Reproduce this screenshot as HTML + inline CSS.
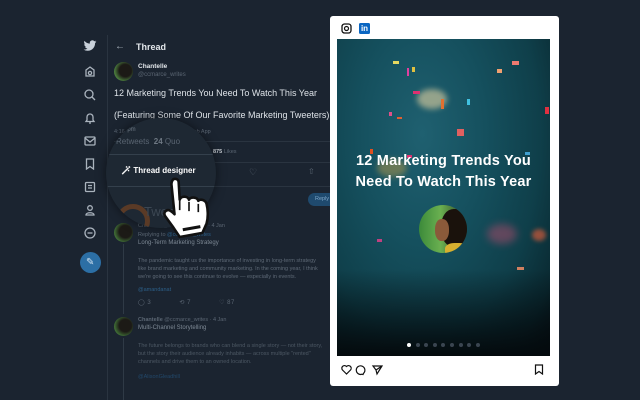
<!DOCTYPE html>
<html><head><meta charset="utf-8"><style>
*{margin:0;padding:0;box-sizing:border-box}
body{width:640px;height:400px;overflow:hidden;background:#1b2430;font-family:"Liberation Sans",sans-serif;position:relative;color:#d8dde3}
.a{position:absolute;white-space:nowrap}
.dim{color:#5b6673}
.side svg{position:absolute;left:84px}
</style></head><body>
<div class="a" style="left:107px;top:35px;width:1px;height:365px;background:#2a3440"></div>
<svg class="a" style="left:83px;top:40px" width="14" height="12" viewBox="0 0 24 20"><path d="M23 2.5c-.8.4-1.7.6-2.6.7.9-.6 1.6-1.4 2-2.5-.9.5-1.9.9-2.9 1.1A4.5 4.5 0 0 0 11.8 6 12.8 12.8 0 0 1 2.5 1.3 4.5 4.5 0 0 0 3.9 7.3c-.7 0-1.4-.2-2-.6 0 2.2 1.6 4 3.6 4.4-.7.2-1.4.2-2 .1.6 1.8 2.2 3.1 4.2 3.1A9 9 0 0 1 1 16.2 12.8 12.8 0 0 0 7.9 18.2c8.3 0 12.8-6.9 12.8-12.8v-.6c.9-.6 1.6-1.4 2.3-2.3z" fill="#c9d1da"/></svg>
<div class="side" style="stroke:#aab3bd;fill:none;stroke-width:1.3">
<svg style="top:66px" width="12" height="12"><path d="M2 4l4-3 4 3v6H2z"/><circle cx="6" cy="7" r="1.6"/></svg>
<svg style="top:89px" width="12" height="12"><circle cx="5" cy="5" r="4"/><path d="M8 8l3 3"/></svg>
<svg style="top:112px" width="12" height="12"><path d="M3 8V5a3 3 0 0 1 6 0v3l1 1.5H2zM5 11h2"/></svg>
<svg style="top:135px" width="12" height="12"><rect x="1" y="2" width="10" height="8" rx="1"/><path d="M1 3l5 4 5-4"/></svg>
<svg style="top:158px" width="12" height="12"><path d="M2.5 1h7v10L6 8.5 2.5 11z"/></svg>
<svg style="top:181px" width="12" height="12"><rect x="1.5" y="1.5" width="9" height="9" rx="1"/><path d="M4 4.5h4M4 7h4"/></svg>
<svg style="top:204px" width="12" height="12"><circle cx="6" cy="4" r="2.3"/><path d="M2 11c0-3 8-3 8 0z"/></svg>
<svg style="top:227px" width="12" height="12"><circle cx="6" cy="6" r="5"/><path d="M3.5 6h5"/></svg>
</div>
<div class="a" style="left:80px;top:252px;width:21px;height:21px;border-radius:50%;background:#2c6fa5"></div>
<div class="a" style="left:86px;top:257px;color:#cfe1f0;font-size:10px">✎</div>
<div class="a" style="left:115px;top:41px;font-size:10px;color:#aab3bd">←</div>
<div class="a" style="left:136px;top:42px;font-size:9px;font-weight:bold;color:#e4e8ec">Thread</div>
<div class="a" style="left:114px;top:62px;width:19px;height:19px;border-radius:50%;background:radial-gradient(circle at 60% 45%,#1c1a16 40%,#4a7a3c 70%,#7aa060)"></div>
<div class="a" style="left:138px;top:63px;font-size:6.5px;font-weight:bold;color:#e0e4e8">Chantelle</div>
<div class="a dim" style="left:138px;top:72px;font-size:6px">@ccmarce_writes</div>
<div class="a" style="left:114px;top:88px;font-size:9px;color:#dde2e7">12 Marketing Trends You Need To Watch This Year</div>
<div class="a" style="left:114px;top:110px;font-size:9px;color:#dde2e7">(Featuring Some Of Our Favorite Marketing Tweeters)</div>
<div class="a dim" style="left:114px;top:129px;font-size:5.5px">4:16 pm · 4 Jan 2021 · Twitter Web App</div>
<div class="a" style="left:114px;top:141px;width:216px;height:1px;background:#2a3440"></div>
<div class="a" style="left:213px;top:149px;font-size:5.5px;color:#c9ced4"><b>875</b> <span class="dim">Likes</span></div>
<div class="a" style="left:114px;top:162px;width:216px;height:1px;background:#2a3440"></div>
<div class="a dim" style="left:249px;top:167px;font-size:9px">♡</div>
<div class="a dim" style="left:308px;top:167px;font-size:8px">⇧</div>
<div class="a" style="left:114px;top:186px;width:216px;height:1px;background:#2a3440"></div>
<div class="a" style="left:308px;top:193px;width:30px;height:13px;border-radius:7px;background:#1f4a6e;font-size:5.5px;color:#7ea6c8;padding:3px 7px">Reply</div>
<div class="a" style="left:114px;top:223px;width:19px;height:19px;border-radius:50%;background:radial-gradient(circle at 60% 45%,#1c1a16 40%,#3e6a34 70%,#6a8e58)"></div>
<div class="a" style="left:123px;top:244px;width:1px;height:70px;background:#2f3a46"></div>
<div class="a dim" style="left:138px;top:223px;font-size:5.5px">Chantelle @ccmarce_writes · 4 Jan</div>
<div class="a dim" style="left:138px;top:232px;font-size:5.5px">Replying to <span style="color:#2c5f88">@ccmarce_writes</span></div>
<div class="a" style="left:138px;top:240px;font-size:6px;color:#7d8894">Long-Term Marketing Strategy</div>
<div class="a" style="left:138px;top:257px;font-size:5.5px;line-height:8px;color:#5e6976">The pandemic taught us the importance of investing in long-term strategy<br>like brand marketing and community marketing. In the coming year, I think<br>we're going to see this continue to evolve — especially in events.</div>
<div class="a" style="left:138px;top:287px;font-size:5.5px;color:#2c5f88">@amandanat</div>
<div class="a dim" style="left:138px;top:299px;font-size:6px;letter-spacing:.5px">◯ 3 &nbsp;&nbsp;&nbsp;&nbsp;&nbsp;&nbsp;&nbsp;&nbsp;&nbsp;&nbsp;&nbsp;&nbsp;⟲ 7 &nbsp;&nbsp;&nbsp;&nbsp;&nbsp;&nbsp;&nbsp;&nbsp;&nbsp;&nbsp;&nbsp;&nbsp;♡ 87</div>
<div class="a" style="left:114px;top:317px;width:19px;height:19px;border-radius:50%;background:radial-gradient(circle at 60% 45%,#1c1a16 40%,#3e6a34 70%,#6a8e58)"></div>
<div class="a" style="left:123px;top:338px;width:1px;height:62px;background:#2f3a46"></div>
<div class="a dim" style="left:138px;top:317px;font-size:5.5px"><b>Chantelle</b> @ccmarce_writes · 4 Jan</div>
<div class="a" style="left:138px;top:325px;font-size:6px;color:#7d8894">Multi-Channel Storytelling</div>
<div class="a" style="left:138px;top:342px;font-size:5.5px;line-height:8px;color:#4d5864">The future belongs to brands who can blend a single story — not their story,<br>but the story their audience already inhabits — across multiple "rented"<br>channels and drive them to an owned location.</div>
<div class="a" style="left:138px;top:374px;font-size:5.5px;color:#22486a">@AlisonGleadhill</div>
<div class="a" style="left:106px;top:118px;width:110px;height:110px;border-radius:50%;background:#1e2833;box-shadow:0 0 10px rgba(0,0,0,.5);overflow:hidden">
 <div class="a" style="left:8px;top:9px;font-size:6px;color:#6c7783">4:16 pm</div>
 <div class="a" style="left:10px;top:19px;font-size:8px;color:#5a6572">Retweets &nbsp;<b style="color:#6e7883">24</b> Quo</div>
 <div class="a" style="left:0;top:36px;width:110px;height:1px;background:#34404c"></div>
 <div class="a" style="left:0;top:68px;width:110px;height:1px;background:#34404c"></div>
 <div class="a" style="left:10px;top:86px;width:34px;height:34px;border-radius:50%;border:5px solid #5a3a26"></div>
 <div class="a" style="left:38px;top:86px;font-size:13px;color:#3c4753">Tweet</div>
</div>
<div class="a" style="left:121px;top:166px;font-size:8px;font-weight:bold;color:#fff">🪄︎ Thread designer</div>
<svg class="a" style="left:160px;top:176px" width="58" height="62" viewBox="0 0 56 60"><path d="M13 3c3-1 5 1 5 3l1 17c1-4 8-4 9 0 1-3 8-3 9 1 2-2 7-1 8 3 1 4 2 12 0 19l-4 9-22 4-6-9-8-11c-2-3 0-6 3-6 2 0 4 2 6 4L11 8c0-2 1-4 2-5z" fill="#fff" stroke="#111" stroke-width="2.5" stroke-linejoin="round"/><path d="M22 52l17-3" stroke="#111" stroke-width="3"/><path d="M19 24v9M28 25v9M37 27v8" stroke="#111" stroke-width="1.6"/></svg>
<div class="a" style="left:330px;top:16px;width:229px;height:370px;background:#fff;border-radius:3px"></div>
<svg class="a" style="left:341px;top:23px" width="11" height="11"><rect x="1" y="1" width="9" height="9" rx="2.5" fill="none" stroke="#111" stroke-width="1.3"/><circle cx="5.5" cy="5.5" r="2" fill="none" stroke="#111" stroke-width="1.2"/></svg>
<div class="a" style="left:359px;top:23px;width:11px;height:11px;background:#0a66c2;border-radius:1.5px;color:#fff;font-size:8px;font-weight:bold;line-height:11px;text-align:center">in</div>
<div class="a" style="left:337px;top:39px;width:213px;height:317px;overflow:hidden;background:radial-gradient(ellipse at 40% 30%,#1f6070 0%,#15505e 35%,#0f3f4a 65%,#0a2a32 85%,#050c10 100%)">
 <div class="a" style="left:0;top:230px;width:213px;height:87px;background:linear-gradient(#0b2a3200,#040a0d)"></div>
 <div class="a" style="left:80px;top:50px;width:30px;height:20px;border-radius:50%;background:#c8c29a;opacity:.7;filter:blur(3px)"></div>
 <div class="a" style="left:40px;top:120px;width:30px;height:18px;border-radius:50%;background:#b79a4a;opacity:.5;filter:blur(3px)"></div>
 <div class="a" style="left:150px;top:185px;width:30px;height:20px;border-radius:50%;background:#b04a6a;opacity:.5;filter:blur(4px)"></div>
 <div class="a" style="left:195px;top:190px;width:14px;height:12px;border-radius:50%;background:#d05a3a;opacity:.7;filter:blur(2px)"></div>
 <div class="a" style="left:56px;top:22px;width:6px;height:3px;background:#e6d860"></div>
 <div class="a" style="left:175px;top:22px;width:7px;height:4px;background:#ee7a70"></div>
 <div class="a" style="left:160px;top:30px;width:5px;height:4px;background:#f0a070"></div>
 <div class="a" style="left:70px;top:29px;width:2px;height:8px;background:#e040a0"></div>
 <div class="a" style="left:75px;top:28px;width:3px;height:5px;background:#e0c040"></div>
 <div class="a" style="left:76px;top:52px;width:7px;height:3px;background:#e03070"></div>
 <div class="a" style="left:104px;top:60px;width:3px;height:10px;background:#e07030"></div>
 <div class="a" style="left:130px;top:60px;width:3px;height:6px;background:#40c0e0"></div>
 <div class="a" style="left:120px;top:90px;width:7px;height:7px;background:#e06060"></div>
 <div class="a" style="left:52px;top:73px;width:3px;height:4px;background:#e0508a"></div>
 <div class="a" style="left:60px;top:78px;width:5px;height:2px;background:#e06030"></div>
 <div class="a" style="left:33px;top:110px;width:3px;height:5px;background:#e05020"></div>
 <div class="a" style="left:70px;top:116px;width:5px;height:3px;background:#e03070"></div>
 <div class="a" style="left:208px;top:68px;width:4px;height:7px;background:#e03040"></div>
 <div class="a" style="left:188px;top:113px;width:5px;height:3px;background:#40a0d0"></div>
 <div class="a" style="left:40px;top:200px;width:5px;height:3px;background:#c04080"></div>
 <div class="a" style="left:180px;top:228px;width:7px;height:3px;background:#d08060"></div>
 <div class="a" style="left:0;top:112px;width:213px;text-align:center;font-size:14.5px;font-weight:bold;color:#fff;line-height:21px;letter-spacing:.2px">12 Marketing Trends You<br>Need To Watch This Year</div>
 <div class="a" style="left:82px;top:166px;width:48px;height:48px;border-radius:50%;overflow:hidden;background:linear-gradient(90deg,#3c8a3a,#6ab050 45%,#2a3a20)">
  <div class="a" style="left:22px;top:4px;width:28px;height:38px;border-radius:45%;background:#1a120c"></div>
  <div class="a" style="left:16px;top:14px;width:14px;height:22px;border-radius:45%;background:#8a5a3a"></div>
  <div class="a" style="left:26px;top:38px;width:24px;height:14px;border-radius:40%;background:#d8b030"></div>
 </div>
 <div class="a" style="left:70px;top:304px;width:75px;height:4px;display:flex;gap:4.6px">
  <i style="width:4px;height:4px;border-radius:50%;background:#fff"></i><i style="width:4px;height:4px;border-radius:50%;background:#3a4550"></i><i style="width:4px;height:4px;border-radius:50%;background:#3a4550"></i><i style="width:4px;height:4px;border-radius:50%;background:#3a4550"></i><i style="width:4px;height:4px;border-radius:50%;background:#3a4550"></i><i style="width:4px;height:4px;border-radius:50%;background:#3a4550"></i><i style="width:4px;height:4px;border-radius:50%;background:#3a4550"></i><i style="width:4px;height:4px;border-radius:50%;background:#3a4550"></i><i style="width:4px;height:4px;border-radius:50%;background:#3a4550"></i>
 </div>
</div>
<svg class="a" style="left:341px;top:364px" width="48" height="12" fill="none" stroke="#111" stroke-width="1.2"><path d="M5.5 10L1.5 6A2.3 2.3 0 0 1 5.5 2.5 2.3 2.3 0 0 1 9.5 6z"/><path d="M22 10.5l-1-.3A4.3 4.3 0 1 1 22.8 9z"/><path d="M32 2h9l-5 8-1-4zM35 6l6-4"/></svg>
<svg class="a" style="left:534px;top:364px" width="10" height="11" fill="none" stroke="#111" stroke-width="1.2"><path d="M1.5 1h7v9L5 7.5 1.5 10z"/></svg>
</body></html>
